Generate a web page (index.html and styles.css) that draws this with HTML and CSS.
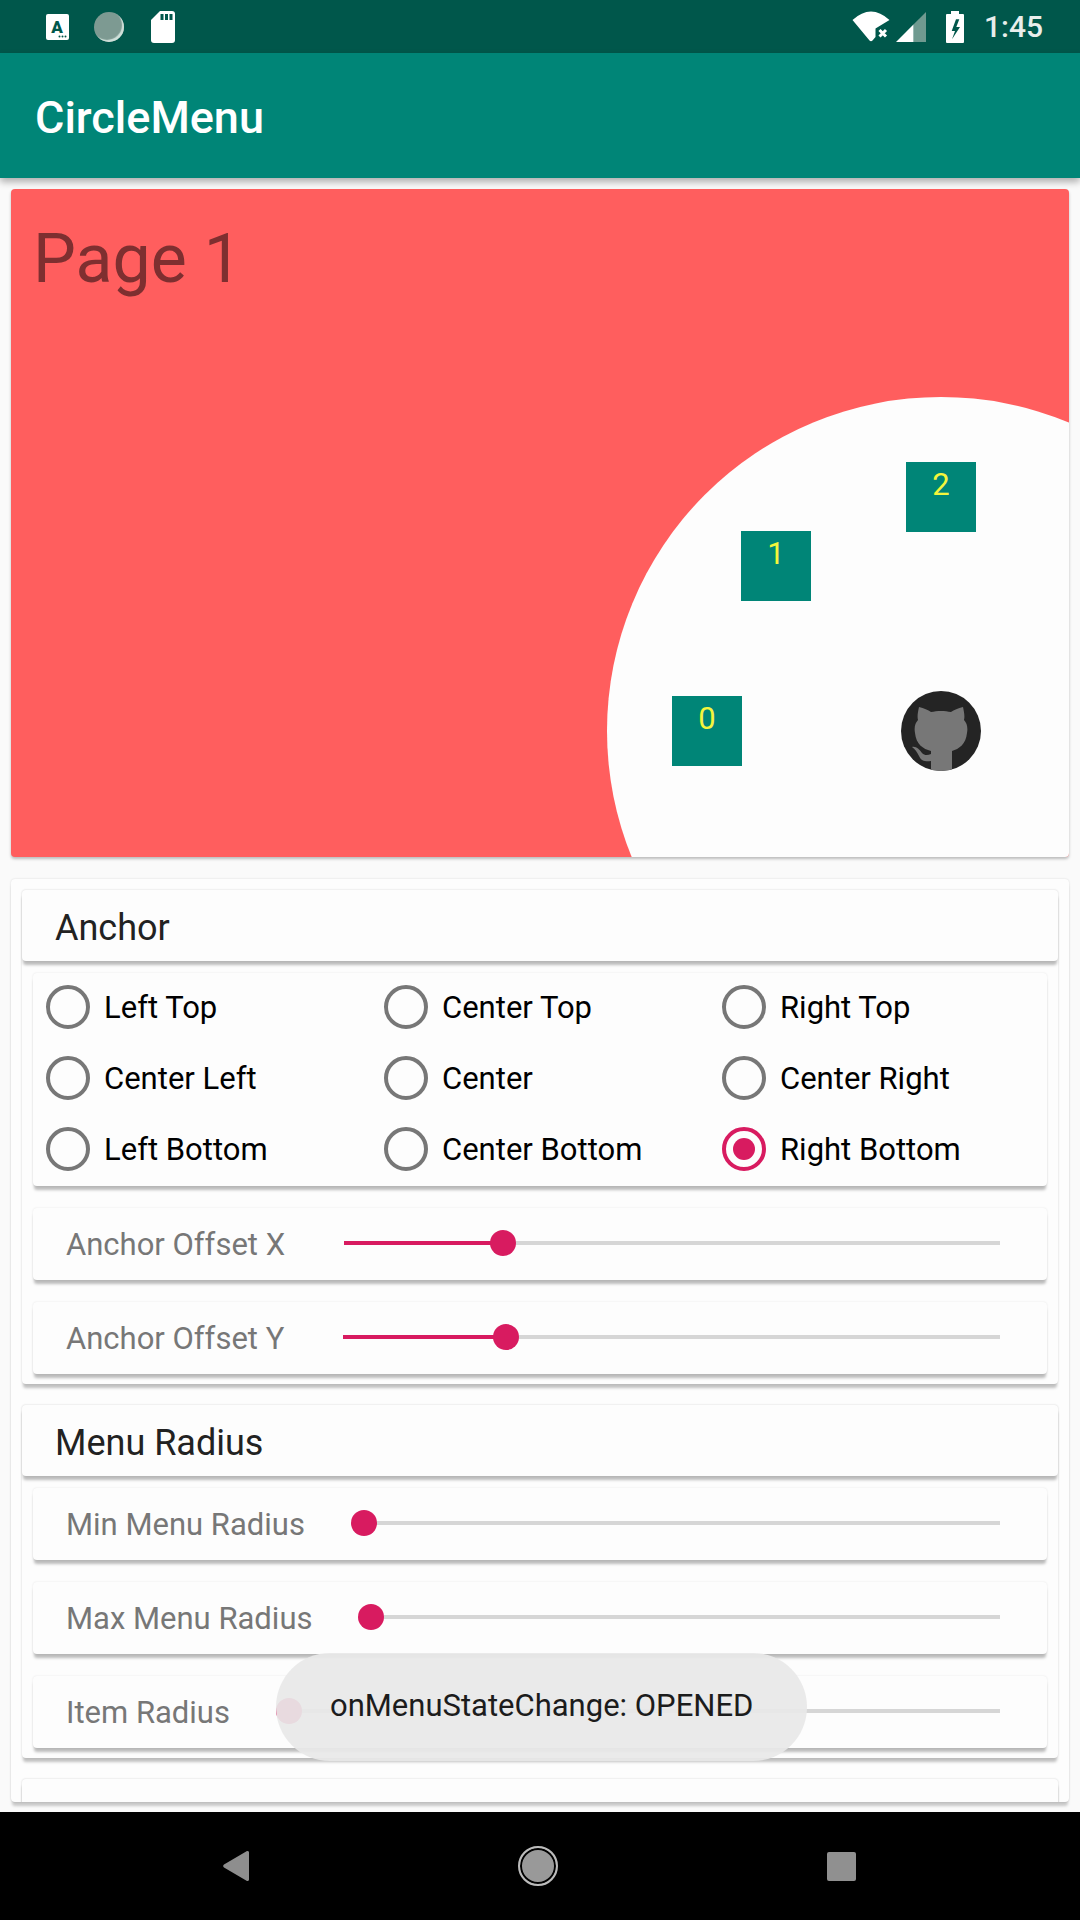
FILE: index.html
```html
<!DOCTYPE html>
<html lang="en">
<head>
  <meta charset="UTF-8" />
  <meta name="viewport" content="width=device-width, initial-scale=1.0" />
  <title>CircleMenu</title>
  <link rel="stylesheet" href="styles.css">
</head>
<body>
  <div class="status-bar">
    <div class="status-left">
      <svg class="icon-translate" width="23" height="26" viewBox="0 0 23 26">
        <rect width="23" height="26" rx="2" fill="#fff"/>
        <text x="11" y="18.5" text-anchor="middle" class="icon-letter">A</text>
        <circle cx="13.5" cy="22.5" r="1" fill="#00574b"/>
        <circle cx="16.5" cy="22.5" r="1" fill="#00574b"/>
        <circle cx="19.5" cy="22.5" r="1" fill="#00574b"/>
      </svg>
      <div class="icon-disc"></div>
      <svg class="icon-sd" width="24" height="32" viewBox="0 0 24 32">
        <path d="M9 0H21a3 3 0 0 1 3 3V29a3 3 0 0 1-3 3H3a3 3 0 0 1-3-3V9Z" fill="#fff"/>
        <rect x="9.5" y="3" width="3" height="6" fill="#00574b"/>
        <rect x="14" y="3" width="3" height="6" fill="#00574b"/>
        <rect x="18.5" y="3" width="3" height="6" fill="#00574b"/>
      </svg>
    </div>
    <div class="status-right">
      <svg class="icon-wifi" width="38" height="32" viewBox="0 0 38 32">
        <path d="M0.5 9Q19 -8 37.5 9L23.5 17.5V26L20.5 29.5Q19 31 17.5 29.5Z" fill="#fff"/>
        <path d="M27.5 19L34 25.5M34 19L27.5 25.5" stroke="#fff" stroke-width="3" fill="none"/>
      </svg>
      <svg class="icon-signal" width="30" height="30" viewBox="0 0 30 30">
        <path d="M0 30L17.7 12.3V30Z" fill="#fff"/>
        <path d="M17.7 12.3L30 0V30H17.7Z" fill="#6f9a90"/>
      </svg>
      <svg class="icon-battery" width="18" height="32" viewBox="0 0 18 32">
        <path d="M5 0H13V3H17a1 1 0 0 1 1 1V31a1 1 0 0 1-1 1H1a1 1 0 0 1-1-1V4a1 1 0 0 1 1-1H5Z" fill="#fff"/>
        <path d="M10 8.3L5.7 20H9L6 28.3L14 16H10.3L13.3 8.3Z" fill="#00574b"/>
      </svg>
      <span class="clock">1:45</span>
    </div>
  </div>

  <div class="app-bar">CircleMenu</div>

  <div class="content">
    <div class="page-card">
      <div class="page-title">Page 1</div>
      <div class="menu-circle"></div>
      <div class="menu-item item-two">2</div>
      <div class="menu-item item-one">1</div>
      <div class="menu-item item-zero">0</div>
      <svg class="menu-center" width="80" height="80" viewBox="0 0 80 80">
        <defs>
          <clipPath id="center-clip"><circle cx="40" cy="40" r="40"/></clipPath>
        </defs>
        <circle cx="40" cy="40" r="40" fill="#242424"/>
        <g clip-path="url(#center-clip)" fill="#777">
          <path d="M18 16C23 17 27 19 30 21C36 19.500 44 19.500 50 21C53 19 57 17 62 16C63 21 64 25 63 29C66 32 67 37 66 42C65 53 58 58 51 60V80H30V60C22 58 15 53 14 42C13 37 14 32 17 29C16 25 17 21 18 16Z"/>
          <path d="M11 56C15 55 18 58 21 62C24 65 27 64 30 63V70C25 71 20 70 18 65C16 61 14 58 11 56Z"/>
        </g>
      </svg>
    </div>

    <div class="settings-card">
      <div class="section">
        <div class="section-title">Anchor</div>
        <div class="radio-card">
          <div class="radio-option"><span class="radio"></span>Left Top</div>
          <div class="radio-option"><span class="radio"></span>Center Top</div>
          <div class="radio-option"><span class="radio"></span>Right Top</div>
          <div class="radio-option"><span class="radio"></span>Center Left</div>
          <div class="radio-option"><span class="radio"></span>Center</div>
          <div class="radio-option"><span class="radio"></span>Center Right</div>
          <div class="radio-option"><span class="radio"></span>Left Bottom</div>
          <div class="radio-option"><span class="radio"></span>Center Bottom</div>
          <div class="radio-option"><span class="radio checked"></span>Right Bottom</div>
        </div>
        <div class="slider-card">
          <span class="slider-label">Anchor Offset X</span>
          <div class="track"><div class="fill" style="width: 24.3%"><span class="thumb"></span></div></div>
        </div>
        <div class="slider-card">
          <span class="slider-label">Anchor Offset Y</span>
          <div class="track"><div class="fill" style="width: 24.8%"><span class="thumb"></span></div></div>
        </div>
      </div>

      <div class="section">
        <div class="section-title">Menu Radius</div>
        <div class="slider-card">
          <span class="slider-label">Min Menu Radius</span>
          <div class="track"><div class="fill" style="width: 0"><span class="thumb"></span></div></div>
        </div>
        <div class="slider-card">
          <span class="slider-label">Max Menu Radius</span>
          <div class="track"><div class="fill" style="width: 0"><span class="thumb"></span></div></div>
        </div>
        <div class="slider-card">
          <span class="slider-label">Item Radius</span>
          <div class="track"><div class="fill" style="width: 0"><span class="thumb"></span></div></div>
        </div>
      </div>

      <div class="section">
        <div class="section-title"></div>
      </div>
    </div>

    <div class="toast">onMenuStateChange: OPENED</div>
  </div>

  <div class="nav-bar">
    <svg width="26" height="32" viewBox="0 0 26 32">
      <path d="M24 1a1.5 1.5 0 0 1 2 1.5V29.5a1.5 1.5 0 0 1-2 1.5L1 17.5a2 2 0 0 1 0-3Z" fill="#8e8e8e"/>
    </svg>
    <div class="nav-home"></div>
    <div class="nav-recent"></div>
  </div>
</body>
</html>
```

FILE: styles.css
```css
* {
  box-sizing: border-box;
}

body {
  margin: 0;
  width: 1080px;
  height: 1920px;
  display: flex;
  flex-direction: column;
  overflow: hidden;
  background: #fafafa;
  font-family: Roboto, "Liberation Sans", sans-serif;
}

/* status bar */
.status-bar {
  height: 53px;
  flex: none;
  display: flex;
  align-items: center;
  justify-content: space-between;
  padding: 0 37px 0 46px;
  background: #00574b;
}

.status-left,
.status-right {
  display: flex;
  align-items: center;
}

.icon-letter {
  font-size: 17px;
  font-weight: 900;
  fill: #00574b;
}

.icon-disc {
  width: 30px;
  height: 30px;
  margin-left: 25px;
  border-radius: 50%;
  background: #7d9a92;
  box-shadow: inset -2px -2px 1px #cfe0da;
}

.icon-sd {
  margin-left: 27px;
}

.icon-signal {
  margin-left: 6px;
}

.icon-battery {
  margin-left: 20px;
}

.clock {
  margin-left: 20px;
  color: #e8eeec;
  font-size: 30px;
  font-weight: 500;
}

/* toolbar */
.app-bar {
  height: 125px;
  flex: none;
  position: relative;
  z-index: 2;
  display: flex;
  align-items: center;
  padding: 3px 0 0 35px;
  background: #008577;
  color: #fff;
  font-size: 45px;
  font-weight: 500;
  box-shadow: 0 4px 7px rgba(0, 0, 0, 0.3);
}

.content {
  flex: 1;
  position: relative;
  min-height: 0;
  overflow: hidden;
  padding: 11px 11px 10px;
}

/* demo page with the opened menu */
.page-card {
  height: 668px;
  position: relative;
  overflow: hidden;
  padding: 30px 22px;
  border-radius: 4px;
  background: #ff5e5e;
  box-shadow: 0 2px 3px rgba(0, 0, 0, 0.25);
}

.page-title {
  color: #7e2f30;
  font-size: 68px;
}

.menu-circle {
  position: absolute;
  left: 596px;
  top: 208px;
  width: 668px;
  height: 668px;
  border-radius: 50%;
  background: #fdfdfd;
}

.menu-item {
  position: absolute;
  width: 70px;
  height: 70px;
  padding-top: 4px;
  background: #008577;
  color: #f4f53c;
  font-size: 31px;
  text-align: center;
}

.item-two {
  left: 895px;
  top: 273px;
}

.item-one {
  left: 730px;
  top: 342px;
}

.item-zero {
  left: 661px;
  top: 507px;
}

.menu-center {
  position: absolute;
  left: 890px;
  top: 502px;
}

/* settings */
.settings-card {
  height: 923px;
  margin-top: 22px;
  overflow: hidden;
  padding: 11px 11px 0;
  border-radius: 4px;
  background: #fdfdfd;
  box-shadow: 0 5px 3px -1px rgba(0, 0, 0, 0.2), 0 0 2px rgba(0, 0, 0, 0.15);
}

.section {
  margin-bottom: 21px;
  padding-bottom: 10px;
  border-radius: 4px;
  background: #fdfdfd;
  box-shadow: 0 5px 3px -1px rgba(0, 0, 0, 0.24), 0 0 2px rgba(0, 0, 0, 0.1);
}

.section-title {
  height: 71px;
  display: flex;
  align-items: center;
  padding: 4px 0 0 33px;
  border-radius: 4px;
  background: #fdfdfd;
  color: #222;
  font-size: 36px;
  box-shadow: 0 5px 3px -1px rgba(0, 0, 0, 0.26), 0 0 2px rgba(0, 0, 0, 0.1);
}

.radio-card {
  margin: 12px 11px 22px;
  display: grid;
  grid-template-columns: repeat(3, 338px);
  grid-auto-rows: 44px;
  row-gap: 27px;
  padding: 12px 13px 15px;
  border-radius: 4px;
  background: #fdfdfd;
  box-shadow: 0 5px 3px -1px rgba(0, 0, 0, 0.26), 0 0 2px rgba(0, 0, 0, 0.1);
}

.radio-option {
  display: flex;
  align-items: center;
  gap: 14px;
  padding-top: 1px;
  color: #000;
  font-size: 31px;
}

.radio {
  width: 44px;
  height: 44px;
  flex: none;
  display: flex;
  align-items: center;
  justify-content: center;
  margin-top: -1px;
  border: 4px solid #777;
  border-radius: 50%;
}

.radio.checked {
  border-color: #d81b60;
}

.radio.checked::after {
  content: "";
  width: 22px;
  height: 22px;
  border-radius: 50%;
  background: #d81b60;
}

.slider-card {
  height: 72px;
  margin: 0 11px 22px;
  display: flex;
  align-items: center;
  padding: 0 47px 0 33px;
  border-radius: 4px;
  background: #fdfdfd;
  box-shadow: 0 5px 3px -1px rgba(0, 0, 0, 0.26), 0 0 2px rgba(0, 0, 0, 0.1);
}

.section-title + .slider-card {
  margin-top: 12px;
}

.slider-card:last-child {
  margin-bottom: 0;
}

.slider-label {
  margin-right: 59px;
  color: #777;
  font-size: 31px;
}

.track {
  flex: 1;
  height: 4px;
  margin-bottom: 2px;
  background: #d6d6d6;
}

.fill {
  height: 100%;
  position: relative;
  background: #d81b60;
}

.thumb {
  position: absolute;
  right: -13px;
  top: -11px;
  width: 26px;
  height: 26px;
  border-radius: 50%;
  background: #d81b60;
}

.toast {
  position: absolute;
  left: 276px;
  bottom: 51px;
  height: 108px;
  display: flex;
  align-items: center;
  padding: 0 54px 3px;
  border-radius: 54px;
  background: rgba(232, 232, 232, 0.93);
  color: #1c1c1c;
  font-size: 31px;
}

/* navigation */
.nav-bar {
  height: 108px;
  flex: none;
  position: relative;
  display: flex;
  align-items: center;
  background: #000;
  padding: 0 224px 0 223px;
  justify-content: space-between;
}

.nav-home {
  width: 40px;
  height: 40px;
  border: 2px solid #bbb;
  border-radius: 50%;
  background: #999;
  box-shadow: inset 0 0 0 2px #000;
}

.nav-recent {
  width: 29px;
  height: 29px;
  border-radius: 2px;
  background: #909090;
}
```
